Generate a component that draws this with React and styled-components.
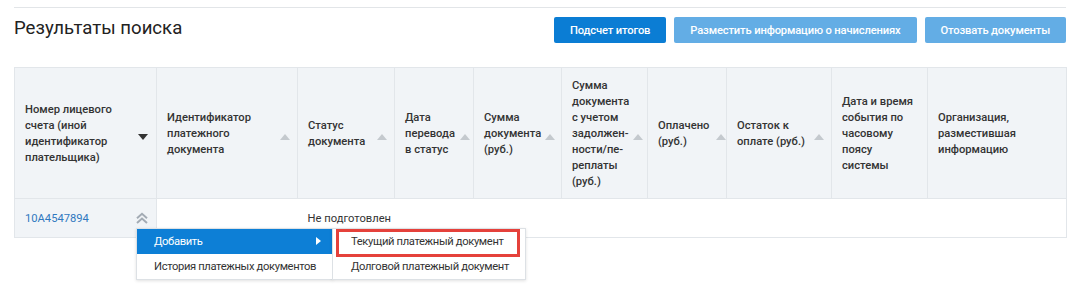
import React from 'react'
import styled, { createGlobalStyle } from 'styled-components'

const GlobalStyle = createGlobalStyle`
  html, body, #root {
    height: 100%;
  }
  body {
    margin: 0;
    background: #fff;
    font-family: Roboto, "Liberation Sans", sans-serif;
    color: #333;
  }
`

const Page = styled.div`
  box-sizing: border-box;
  min-height: 100%;
  padding: 7px 18px 0 14px;
`

const Divider = styled.div`
  height: 1px;
  background: #e2e5e8;
`

const TopBar = styled.div`
  display: flex;
  align-items: flex-start;
  justify-content: space-between;
  padding-top: 9px;
`

const Title = styled.h1`
  margin: -1px 0 0;
  font-size: 18.6px;
  font-weight: 400;
  line-height: 24px;
  color: #222;
`

const Actions = styled.div`
  display: flex;
  gap: 8px;
`

const ActionButton = styled.button`
  height: 26px;
  padding: 0 16px;
  border: 0;
  border-radius: 2px;
  background: ${p => (p.$primary ? '#0b7dd4' : '#63ade5')};
  color: #fff;
  font-family: Roboto, "Liberation Sans", sans-serif;
  font-size: 11.2px;
  font-weight: 500;
  letter-spacing: -0.15px;
  cursor: pointer;
`

const Table = styled.table`
  margin-top: 24px;
  width: 100%;
  border-collapse: collapse;
  table-layout: fixed;
  border: 1px solid #e2e6ea;
`

const Th = styled.th`
  background: #f1f4f7;
  border: 1px solid #e2e6ea;
  padding: 10px ${p => p.$pr}px 8px 10px;
  text-align: left;
  vertical-align: middle;
  font-size: 11.2px;
  font-weight: 500;
  line-height: 16px;
  color: #333;
`

const ThInner = styled.div`
  display: flex;
  align-items: center;
`

const ThText = styled.span`
  flex: 1;
  min-width: 0;
`

const SortArrow = styled.span`
  flex-shrink: 0;
  width: 0;
  height: 0;
  margin-top: 5px;
  border-left: 5.5px solid transparent;
  border-right: 5.5px solid transparent;
  ${p => (p.$active ? 'border-top: 6px solid #333;' : 'border-bottom: 6px solid #c4c9ce;')}
`

const Td = styled.td`
  height: 38px;
  padding: 0 10px;
  font-size: 11.2px;
  color: #333;
  white-space: nowrap;
  background: ${p => (p.$shaded ? '#f1f4f7' : '#fff')};
  border-bottom: 1px solid #e2e6ea;
  border-right: ${p => (p.$shaded ? '1px solid #e2e6ea' : '0')};
`

const AccountCell = styled.div`
  display: flex;
  align-items: center;
  justify-content: space-between;
  margin-right: -2px;
`

const AccountLink = styled.a`
  color: #2f78bf;
  text-decoration: none;
`

const ActionWrap = styled.div`
  position: relative;
  width: 12px;
  height: 12px;
  margin-top: -1px;
`

const Menu = styled.ul`
  position: absolute;
  top: 16px;
  left: 0;
  z-index: 2;
  width: 195px;
  margin: 0;
  padding: 0;
  list-style: none;
  background: #fff;
  border: 1px solid #dde1e5;
  box-shadow: 0 1px 3px rgba(0, 0, 0, 0.12);
  font-size: 11.2px;
  letter-spacing: -0.35px;
`

const MenuItem = styled.li`
  position: relative;
  display: flex;
  align-items: center;
  justify-content: space-between;
  height: 25px;
  padding: 0 11px 0 17px;
  color: ${p => (p.$active ? '#fff' : '#333')};
  background: ${p => (p.$active ? '#0d7fd6' : '#fff')};
  white-space: nowrap;
`

const SubArrow = styled.span`
  width: 0;
  height: 0;
  border-top: 4.5px solid transparent;
  border-bottom: 4.5px solid transparent;
  border-left: 5px solid #fff;
`

const SubMenu = styled.ul`
  position: absolute;
  top: -1px;
  left: 100%;
  width: 192px;
  margin: 0;
  padding: 0;
  list-style: none;
  background: #fff;
  border: 1px solid #dde1e5;
  box-shadow: 0 1px 3px rgba(0, 0, 0, 0.12);
`

const SubItem = styled.li`
  position: relative;
  display: flex;
  align-items: center;
  height: 25px;
  padding-left: 18px;
  color: #333;
  white-space: nowrap;

  ${p =>
    p.$marked &&
    `
    &::after {
      content: '';
      position: absolute;
      left: 3px;
      right: 5px;
      top: 0;
      bottom: -3px;
      border: 3px solid #e5413b;
    }
  `}
`

const columns = [
  { lines: ['Номер лицевого', 'счета (иной', 'идентификатор', 'плательщика)'], w: 142, sort: 'active', pr: 8 },
  { lines: ['Идентификатор', 'платежного', 'документа'], w: 141, sort: 'on', pr: 7 },
  { lines: ['Статус', 'документа'], w: 97, sort: 'on', pr: 7 },
  { lines: ['Дата', 'перевода', 'в статус'], w: 79, sort: 'on', pr: 3 },
  { lines: ['Сумма', 'документа', '(руб.)'], w: 88, sort: 'on', pr: 6 },
  { lines: ['Сумма', 'документа', 'с учетом', 'задолжен-', 'ности/пе-', 'реплаты', '(руб.)'], w: 86, sort: 'on', pr: 4 },
  { lines: ['Оплачено', '(руб.)'], w: 79, sort: 'on', pr: 0 },
  { lines: ['Остаток к', 'оплате (руб.)'], w: 105, sort: 'on', pr: 7 },
  { lines: ['Дата и время', 'события по', 'часовому', 'поясу', 'системы'], w: 96, pr: 8 },
  { lines: ['Организация,', 'разместившая', 'информацию'], w: 139, pr: 8 },
]

const ChevronsUpIcon = () => (
  <svg width="12" height="12" viewBox="0 0 12 12" fill="none" stroke="#a3abb4" strokeWidth="2">
    <path d="M1 6.2 L6 1.8 L11 6.2" />
    <path d="M1 11 L6 6.6 L11 11" />
  </svg>
)

const App = () => {
  return (
    <Page>
      <GlobalStyle />
      <Divider />
      <TopBar>
        <Title>Результаты поиска</Title>
        <Actions>
          <ActionButton $primary>Подсчет итогов</ActionButton>
          <ActionButton>Разместить информацию о начислениях</ActionButton>
          <ActionButton>Отозвать документы</ActionButton>
        </Actions>
      </TopBar>

      <Table>
        <colgroup>
          {columns.map((c, i) => (
            <col key={i} style={{ width: c.w }} />
          ))}
        </colgroup>
        <thead>
          <tr>
            {columns.map((c, i) => (
              <Th key={i} $pr={c.pr}>
                <ThInner>
                  <ThText>
                    {c.lines.map((l, j) => (
                      <React.Fragment key={j}>
                        {j > 0 && <br />}
                        {l}
                      </React.Fragment>
                    ))}
                  </ThText>
                  {c.sort && <SortArrow $active={c.sort === 'active'} />}
                </ThInner>
              </Th>
            ))}
          </tr>
        </thead>
        <tbody>
          <tr>
            <Td $shaded>
              <AccountCell>
                <AccountLink href="#">10A4547894</AccountLink>
                <ActionWrap>
                  <ChevronsUpIcon />
                  <Menu>
                    <MenuItem $active>
                      Добавить
                      <SubArrow />
                      <SubMenu>
                        <SubItem $marked>Текущий платежный документ</SubItem>
                        <SubItem>Долговой платежный документ</SubItem>
                      </SubMenu>
                    </MenuItem>
                    <MenuItem>История платежных документов</MenuItem>
                  </Menu>
                </ActionWrap>
              </AccountCell>
            </Td>
            <Td />
            <Td>Не подготовлен</Td>
            <Td />
            <Td />
            <Td />
            <Td />
            <Td />
            <Td />
            <Td />
          </tr>
        </tbody>
      </Table>
    </Page>
  )
}

export default App
